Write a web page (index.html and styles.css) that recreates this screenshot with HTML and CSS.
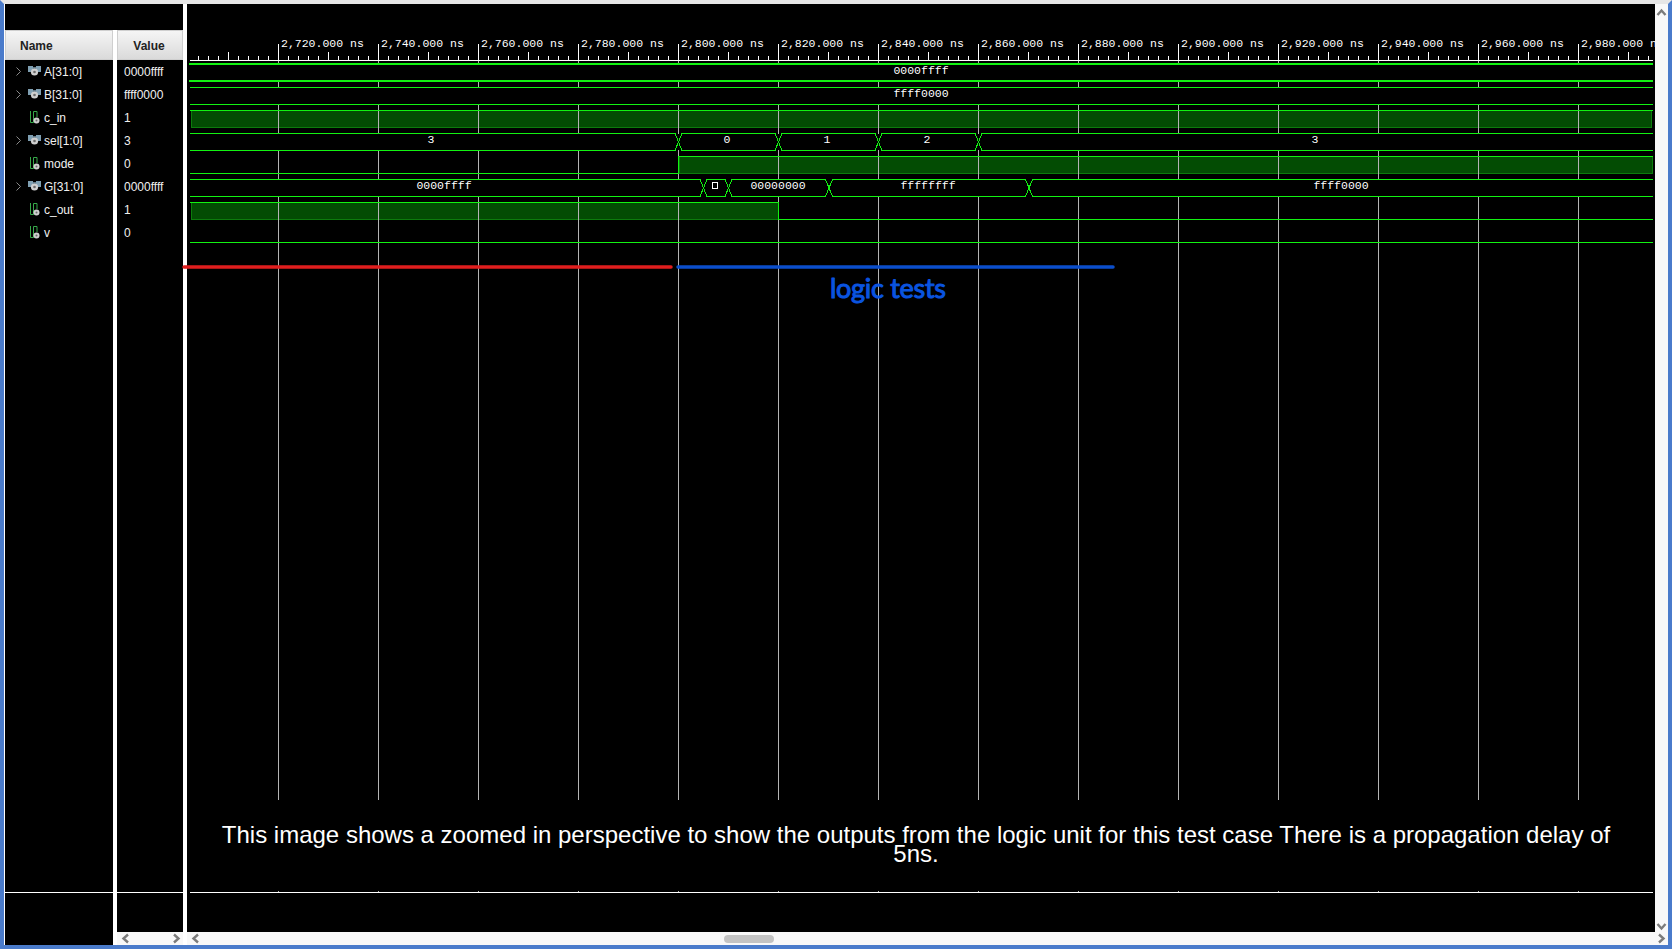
FILE: index.html
```html
<!DOCTYPE html>
<html>
	<head>
		<meta charset="UTF-8">
		<title>Waveform</title>
		<link rel="stylesheet" href="styles.css">
	</head>
	<body>
		<svg class="defs" width="0" height="0">
			<symbol id="chev" viewBox="0 0 5 9">
				<path d="M.5 .5L4.5 4.5L.5 8.5" fill="none" stroke="#8a8a8a" stroke-width="1"/>
			</symbol>
			<symbol id="bus" viewBox="0 0 13 10">
				<rect x="0" y="0" width="5" height="6" fill="#7f9fb2"/>
				<rect x="8" y="0" width="5" height="6" fill="#7f9fb2"/>
				<rect x="5" y="1" width="3" height="2" fill="#5f7786"/>
				<circle cx="6.5" cy="6" r="3.6" fill="#cfcfcf"/>
				<circle cx="6.5" cy="6" r="1.3" fill="#6a6a6a"/>
			</symbol>
			<symbol id="bit" viewBox="0 0 10 13">
				<path d="M.5 0V11.5H3.5V.5H7V6" fill="none" stroke="#37a84a" stroke-width="1"/>
				<circle cx="6.5" cy="9.5" r="3" fill="#cfcfcf"/>
				<circle cx="6.5" cy="9.5" r="1" fill="#6a6a6a"/>
			</symbol>
			<symbol id="arrow" viewBox="0 0 9 11">
				<path d="M7 1.5L2.5 5.5L7 9.5" fill="none" stroke="#7b7b7b" stroke-width="2.4"/>
			</symbol>
		</svg>

		<div class="window">
			<div class="signals">
				<div class="signals-top"></div>
				<div class="signals-body">
					<div class="col col-name">
						<div class="head head-name">Name</div>
						<div class="rows">
							<div class="row"><svg class="chev"><use href="#chev"/></svg><svg class="ico-bus"><use href="#bus"/></svg>A[31:0]</div>
							<div class="row"><svg class="chev"><use href="#chev"/></svg><svg class="ico-bus"><use href="#bus"/></svg>B[31:0]</div>
							<div class="row"><span class="chev"></span><svg class="ico-bit"><use href="#bit"/></svg>c_in</div>
							<div class="row"><svg class="chev"><use href="#chev"/></svg><svg class="ico-bus"><use href="#bus"/></svg>sel[1:0]</div>
							<div class="row"><span class="chev"></span><svg class="ico-bit"><use href="#bit"/></svg>mode</div>
							<div class="row"><svg class="chev"><use href="#chev"/></svg><svg class="ico-bus"><use href="#bus"/></svg>G[31:0]</div>
							<div class="row"><span class="chev"></span><svg class="ico-bit"><use href="#bit"/></svg>c_out</div>
							<div class="row"><span class="chev"></span><svg class="ico-bit"><use href="#bit"/></svg>v</div>
						</div>
						<div class="foot foot-name"></div>
					</div>
					<div class="col col-value">
						<div class="head head-value">Value</div>
						<div class="rows">
							<div class="row row-value">0000ffff</div>
							<div class="row row-value">ffff0000</div>
							<div class="row row-value">1</div>
							<div class="row row-value">3</div>
							<div class="row row-value">0</div>
							<div class="row row-value">0000ffff</div>
							<div class="row row-value">1</div>
							<div class="row row-value">0</div>
						</div>
						<div class="foot"></div>
						<div class="hscroll">
							<svg class="arrow"><use href="#arrow"/></svg>
							<svg class="arrow arrow-right"><use href="#arrow"/></svg>
						</div>
					</div>
				</div>
			</div>

			<div class="wave-col">
				<div class="wave-row">
					<div class="wave">
						<svg class="canvas" viewBox="187 4 1468 928">
							<!-- levels sit under the grid, the grid shows through them -->
							<rect class="level" x="191.5" y="110.5" width="1460" height="17"/>
							<rect class="level" x="679" y="156.5" width="973" height="17"/>
							<rect class="level" x="191.5" y="202.5" width="587" height="17"/>

							<path class="grid" d="M278.5 60V800M378.5 60V800M478.5 60V800M578.5 60V800M678.5 60V800M778.5 60V800M878.5 60V800M978.5 60V800M1078.5 60V800M1178.5 60V800M1278.5 60V800M1378.5 60V800M1478.5 60V800M1578.5 60V800"/>
							<path class="grid" d="M278.5 891V892M378.5 891V892M478.5 891V892M578.5 891V892M678.5 891V892M778.5 891V892M878.5 891V892M978.5 891V892M1078.5 891V892M1178.5 891V892M1278.5 891V892M1378.5 891V892M1478.5 891V892M1578.5 891V892"/>

							<!-- bus rows hide the grid -->
							<rect class="mask" x="189" y="65" width="1464" height="15"/>
							<rect class="mask" x="189" y="88" width="1464" height="16"/>
							<rect class="mask" x="189" y="134" width="1464" height="16"/>
							<rect class="mask" x="189" y="180" width="1464" height="16"/>

							<!-- ruler -->
							<line class="rule" x1="190" y1="60.5" x2="1653" y2="60.5"/>
							<line class="rule tick" x1="198" y1="58" x2="1655" y2="58"/>
							<line class="rule tick-mid" x1="228" y1="56" x2="1655" y2="56"/>
							<path class="rule" d="M278.5 44V60M378.5 44V60M478.5 44V60M578.5 44V60M678.5 44V60M778.5 44V60M878.5 44V60M978.5 44V60M1078.5 44V60M1178.5 44V60M1278.5 44V60M1378.5 44V60M1478.5 44V60M1578.5 44V60"/>
							<line class="rule" x1="190" y1="892.5" x2="1653" y2="892.5"/>

							<g class="time">
								<text x="281" y="46.5">2,720.000 ns</text>
								<text x="381" y="46.5">2,740.000 ns</text>
								<text x="481" y="46.5">2,760.000 ns</text>
								<text x="581" y="46.5">2,780.000 ns</text>
								<text x="681" y="46.5">2,800.000 ns</text>
								<text x="781" y="46.5">2,820.000 ns</text>
								<text x="881" y="46.5">2,840.000 ns</text>
								<text x="981" y="46.5">2,860.000 ns</text>
								<text x="1081" y="46.5">2,880.000 ns</text>
								<text x="1181" y="46.5">2,900.000 ns</text>
								<text x="1281" y="46.5">2,920.000 ns</text>
								<text x="1381" y="46.5">2,940.000 ns</text>
								<text x="1481" y="46.5">2,960.000 ns</text>
								<text x="1581" y="46.5">2,980.000 n</text>
							</g>

							<!-- A, B -->
							<path class="sig thick" d="M189 64H1653M189 81H1653"/>
							<path class="sig" d="M190 87.5H1653M190 104.5H1653"/>
							<!-- c_in -->
							<path class="sig" d="M190 110.5H1653"/>
							<!-- sel -->
							<path class="sig" d="M190 133.5H675L682 150.5H775L782 133.5H875L882 150.5H975L982 133.5H1653"/>
							<path class="sig" d="M190 150.5H675L682 133.5H775L782 150.5H875L882 133.5H975L982 150.5H1653"/>
							<!-- mode -->
							<path class="sig" d="M190 173.5H678.5V156.5H1653"/>
							<!-- G -->
							<path class="sig" d="M190 179.5H700L707 196.5H725L732 179.5H825.5L832.5 196.5H1025.5L1032.5 179.5H1653"/>
							<path class="sig" d="M190 196.5H700L707 179.5H725L732 196.5H825.5L832.5 179.5H1025.5L1032.5 196.5H1653"/>
							<rect class="unknown" x="712.5" y="182.5" width="5" height="6"/>
							<!-- c_out -->
							<path class="sig" d="M190 202.5H778.5V219.5H1653"/>
							<!-- v -->
							<path class="sig" d="M190 242.5H1653"/>

							<g class="bus-value">
								<text x="921" y="74">0000ffff</text>
								<text x="921" y="97">ffff0000</text>
								<text x="431" y="143">3</text>
								<text x="727" y="143">0</text>
								<text x="827" y="143">1</text>
								<text x="927" y="143">2</text>
								<text x="1315" y="143">3</text>
								<text x="444" y="189">0000ffff</text>
								<text x="778" y="189">00000000</text>
								<text x="928" y="189">ffffffff</text>
								<text x="1341" y="189">ffff0000</text>
							</g>

							<!-- hand annotations -->
							<line class="pen-red" x1="184" y1="267" x2="671" y2="267"/>
							<line class="pen-blue" x1="678" y1="267" x2="1113" y2="267"/>
							<text class="note" x="830" y="298" textLength="116">logic tests</text>
						</svg>
						<p class="caption">This image shows a zoomed in perspective to show the outputs from the logic unit for this test case There is a propagation delay of 5ns.</p>
					</div>
					<div class="vscroll">
						<svg class="arrow arrow-up"><use href="#arrow"/></svg>
						<svg class="arrow arrow-down"><use href="#arrow"/></svg>
					</div>
				</div>
				<div class="hscroll hscroll-main">
					<svg class="arrow"><use href="#arrow"/></svg>
					<div class="thumb"></div>
					<svg class="arrow arrow-right"><use href="#arrow"/></svg>
				</div>
			</div>
		</div>
	</body>
</html>
```

FILE: styles.css
```css
html,body{
	margin: 0;
	height: 100%;
	background: #fff;
	overflow: hidden;
}
.defs{
	position: absolute;
}
.window{
	box-sizing: border-box;
	width: 1672px;
	height: 949px;
	display: flex;
	border-left: 4px solid #4a7bcb;
	border-right: 4px solid #4a7bcb;
	border-bottom: 4px solid #4a7bcb;
	border-top: 4px solid #e6e6e6;
	font-family: "Liberation Sans", Arial, sans-serif;
	font-size: 12px;
	color: #f0f0f0;
}
.signals{
	width: 178px;
	margin-left: 1px;
	display: flex;
	flex-direction: column;
	background: #000;
	flex: none;
}
.signals-top{
	height: 26px;
	background: #000;
}
.signals-body{
	flex: 1;
	display: flex;
	gap: 4px;
	background: #fff;
}
.col{
	display: flex;
	flex-direction: column;
	background: #000;
}
.col-name{
	width: 108px;
}
.col-value{
	width: 66px;
}
.head{
	box-sizing: border-box;
	height: 30px;
	padding-top: 2px;
	display: flex;
	align-items: center;
	justify-content: center;
	font-weight: bold;
	color: #222;
	background: linear-gradient(#f5f5f5,#dadada);
	border: 1px solid #cfcfcf;
}
.head-name{
	justify-content: flex-start;
	padding-left: 14px;
}
.head-value{
	padding-right: 2px;
}
.rows{
	flex: 1;
}
.row{
	height: 23px;
	display: flex;
	align-items: center;
	padding-left: 11px;
	white-space: nowrap;
}
.row-value{
	padding-left: 7px;
}
.chev{
	display: block;
	width: 5px;
	height: 9px;
	margin-right: 7px;
}
.ico-bus{
	width: 13px;
	height: 10px;
	margin-right: 3px;
	margin-bottom: 2px;
}
.ico-bit{
	width: 10px;
	height: 13px;
	margin-left: 2px;
	margin-right: 4px;
}
.foot{
	height: 39px;
	border-top: 1px solid #fff;
}
.foot-name{
	height: 52px;
}

.wave-col{
	flex: none;
	width: 1481px;
	margin-left: 4px;
	display: flex;
	flex-direction: column;
}
.wave-row{
	flex: 1;
	display: flex;
}
.wave{
	position: relative;
	width: 1468px;
	height: 928px;
	background: #000;
}
.canvas{
	display: block;
	width: 1468px;
	height: 928px;
	overflow: visible;
}
.caption{
	position: absolute;
	left: 19px;
	top: 821px;
	width: 1420px;
	margin: 0;
	text-align: center;
	font-size: 24px;
	line-height: 19px;
	color: #fff;
}

.level{
	fill: #034c03;
	stroke: #0c7c0c;
	shape-rendering: crispEdges;
}
.grid{
	fill: none;
	stroke: #b4b4b4;
	shape-rendering: crispEdges;
}
.mask{
	fill: #000;
}
.rule{
	fill: none;
	stroke: #fff;
	shape-rendering: crispEdges;
}
.tick{
	stroke-width: 5;
	stroke-dasharray: 1 9;
}
.tick-mid{
	stroke-width: 8;
	stroke-dasharray: 1 99;
}
.sig{
	fill: none;
	stroke: #12f212;
	shape-rendering: crispEdges;
}
.thick{
	stroke-width: 2;
}
.unknown{
	fill: none;
	stroke: #fff;
	shape-rendering: crispEdges;
}
.time text,.bus-value text{
	font-family: "Liberation Mono", "DejaVu Sans Mono", monospace;
	font-size: 11.5px;
	fill: #fff;
}
.bus-value text{
	text-anchor: middle;
}
.pen-red,.pen-blue{
	stroke-width: 3.5;
	stroke-linecap: round;
}
.pen-red{
	stroke: #e01e1e;
}
.pen-blue{
	stroke: #0b4ecb;
}
.note{
	font-family: "Lato", "Noto Sans", sans-serif;
	font-size: 27px;
	fill: #0a54e0;
	stroke: #0a54e0;
	stroke-width: 1;
	stroke-linejoin: round;
}

.vscroll{
	position: relative;
	width: 13px;
	background: #f8f8f8;
	display: flex;
	flex-direction: column;
	justify-content: space-between;
	align-items: center;
}
.hscroll{
	height: 13px;
	background: #f8f8f8;
	display: flex;
	align-items: center;
	justify-content: space-between;
	padding: 0 2px 0 4px;
}
.hscroll-main{
	justify-content: flex-start;
}
.arrow{
	display: block;
	width: 9px;
	height: 11px;
}
.arrow-right{
	transform: rotate(180deg);
}
.hscroll-main .arrow-right{
	margin-left: auto;
}
.arrow-up{
	transform: rotate(90deg);
	margin-top: 3px;
}
.arrow-down{
	transform: rotate(-90deg);
}
.thumb{
	width: 50px;
	height: 8px;
	margin-left: 524px;
	border-radius: 4px;
	background: #c3c3c3;
}
```
